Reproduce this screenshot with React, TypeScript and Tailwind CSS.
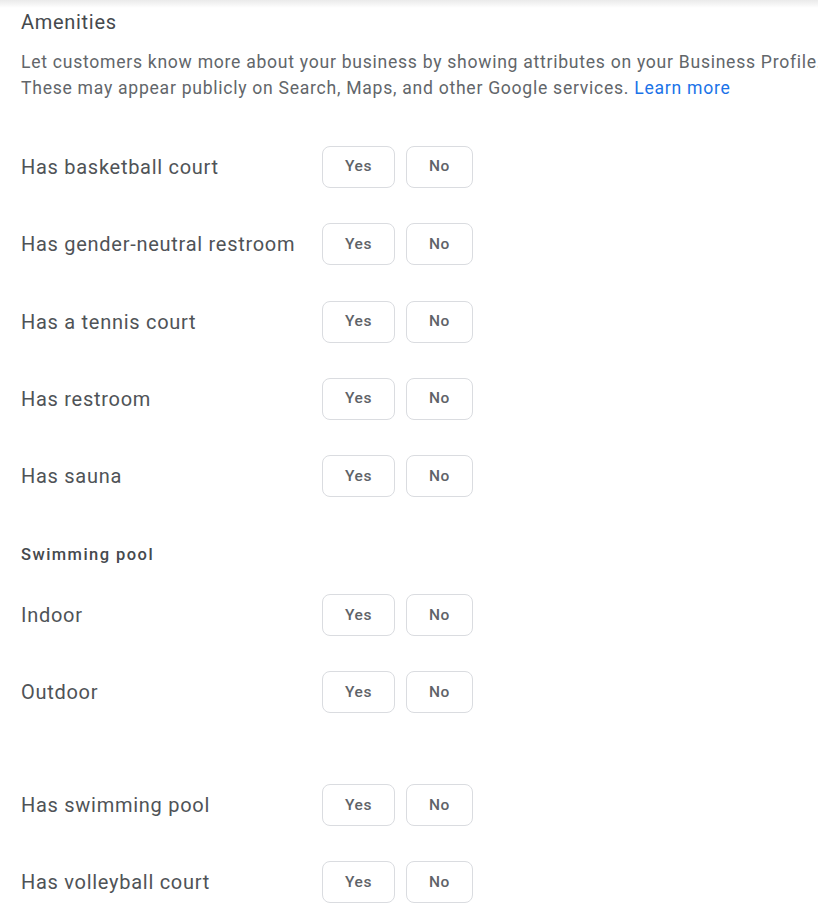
import React from "react";

const Btns = () => (
  <div className="flex gap-[11px]">
    <button className="h-[42px] w-[73px] rounded-[8px] border border-[#dadce0] bg-white text-[15.5px] font-medium tracking-[0.6px] text-[#5f6368]">
      Yes
    </button>
    <button className="h-[42px] w-[67px] rounded-[8px] border border-[#dadce0] bg-white text-[15.5px] font-medium tracking-[0.6px] text-[#5f6368]">
      No
    </button>
  </div>
);

const Row = ({ label }: { label: string }) => (
  <div className="flex h-[42px] items-center">
    <div className="w-[301px] whitespace-nowrap text-[20px] tracking-[0.72px] text-[#4f5357]">{label}</div>
    <Btns />
  </div>
);

export default function App() {
  return (
    <div className="relative h-[916px] w-[818px] overflow-hidden bg-white font-['Roboto',sans-serif]">
      <div className="h-[8px] w-full bg-gradient-to-b from-[#eaeaea] to-white" />
      <div className="pl-[21px]">
        <div className="mt-[1px] text-[20px] leading-[26px] tracking-[0.7px] text-[#45494d]">Amenities</div>
        <div className="mt-[14px] whitespace-nowrap text-[17.6px] leading-[26px] tracking-[0.72px] text-[#62666a]">
          Let customers know more about your business by showing attributes on your Business Profile.
          <br />
          These may appear publicly on Search, Maps, and other Google services.{" "}
          <span className="text-[#1a73e8]">Learn more</span>
        </div>
        <div className="mt-[45px] flex flex-col gap-[35.3px]">
          <Row label="Has basketball court" />
          <Row label="Has gender-neutral restroom" />
          <Row label="Has a tennis court" />
          <Row label="Has restroom" />
          <Row label="Has sauna" />
        </div>
        <div className="mt-[48px] text-[16.5px] font-medium leading-[20px] tracking-[1.45px] text-[#45494d]">Swimming pool</div>
        <div className="mt-[29px] flex flex-col gap-[35px]">
          <Row label="Indoor" />
          <Row label="Outdoor" />
        </div>
        <div className="mt-[71px] flex flex-col gap-[35px]">
          <Row label="Has swimming pool" />
          <Row label="Has volleyball court" />
        </div>
      </div>
    </div>
  );
}
